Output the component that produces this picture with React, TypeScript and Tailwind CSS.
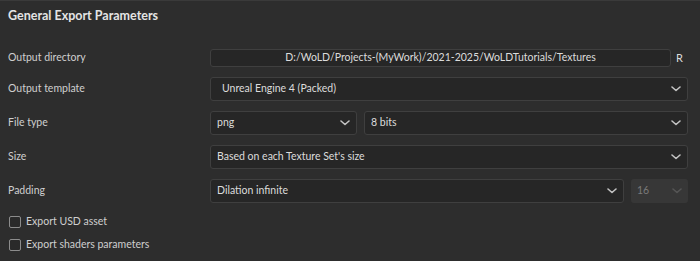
import { ReactNode } from 'react';

function Chevron({ className = '' }: { className?: string }) {
  return (
    <svg width="10" height="6" viewBox="0 0 10 6" className={className} fill="none">
      <path d="M1 1l4 3.5L9 1" stroke="currentColor" strokeWidth="1.6" strokeLinecap="round" strokeLinejoin="round" />
    </svg>
  );
}

function Select({
  value,
  className = '',
  pad = 'pl-[6px]',
  disabled = false,
}: {
  value: string;
  className?: string;
  pad?: string;
  disabled?: boolean;
}) {
  return (
    <div
      className={
        disabled
          ? `flex h-[24px] items-center justify-between rounded-[3px] bg-[#373737] pr-[6px] text-[#7a7a7a] ${pad} ${className}`
          : `flex h-[24px] items-center justify-between rounded-[3px] border border-[#3f3f3f] bg-[#262626] pr-[6px] text-[#dcdcdc] ${pad} ${className}`
      }
    >
      <span>{value}</span>
      <Chevron className={disabled ? 'text-[#555]' : 'text-[#c4c4c4]'} />
    </div>
  );
}

function Row({ label, children }: { label: string; children: ReactNode }) {
  return (
    <div className="flex items-center">
      <div className="w-[202px] text-[#cfcfcf]">{label}</div>
      <div className="flex flex-1 items-center">{children}</div>
    </div>
  );
}

function Check({ label }: { label: string }) {
  return (
    <div className="flex h-[17px] items-center gap-[5px]">
      <div className="h-[12px] w-[12px] rounded-[2px] border border-[#8c8c8c] bg-[#2a2a2a]" />
      <span className="text-[#cfcfcf]">{label}</span>
    </div>
  );
}

export default function App() {
  return (
    <div
      className="h-[261px] w-[700px] overflow-hidden bg-[#2d2d2d] text-[10.5px]"
      style={{ fontFamily: 'Lato, "Noto Sans", sans-serif' }}
    >
      <div className="flex h-[32px] items-center border-t border-[#3a3a3a] px-[8px]">
        <span className="text-[12.5px] font-bold text-[#e4e4e4]">General Export Parameters</span>
      </div>

      <div className="flex flex-col gap-[10px] pl-[8px] pr-[12px] pt-[17px]">
        <Row label="Output directory">
          <div className="flex h-[18px] flex-1 items-center justify-center rounded-[3px] border border-[#3f3f3f] bg-[#262626] text-[#dcdcdc]">
            D:/WoLD/Projects-(MyWork)/2021-2025/WoLDTutorials/Textures
          </div>
          <span className="ml-[5px] mr-[5px] text-[11px] text-[#dcdcdc]">R</span>
        </Row>
        <Row label="Output template">
          <Select value="Unreal Engine 4 (Packed)" pad="pl-[11px]" className="flex-1" />
        </Row>
        <Row label="File type">
          <Select value="png" className="w-[147px]" />
          <Select value="8 bits" className="ml-[7px] flex-1" />
        </Row>
        <Row label="Size">
          <Select value="Based on each Texture Set's size" className="flex-1" />
        </Row>
        <Row label="Padding">
          <Select value="Dilation infinite" className="flex-1" />
          <Select value="16" disabled className="ml-[7px] w-[57px]" />
        </Row>
      </div>

      <div className="flex flex-col gap-[6px] pl-[9px] pt-[10px]">
        <Check label="Export USD asset" />
        <Check label="Export shaders parameters" />
      </div>
    </div>
  );
}
